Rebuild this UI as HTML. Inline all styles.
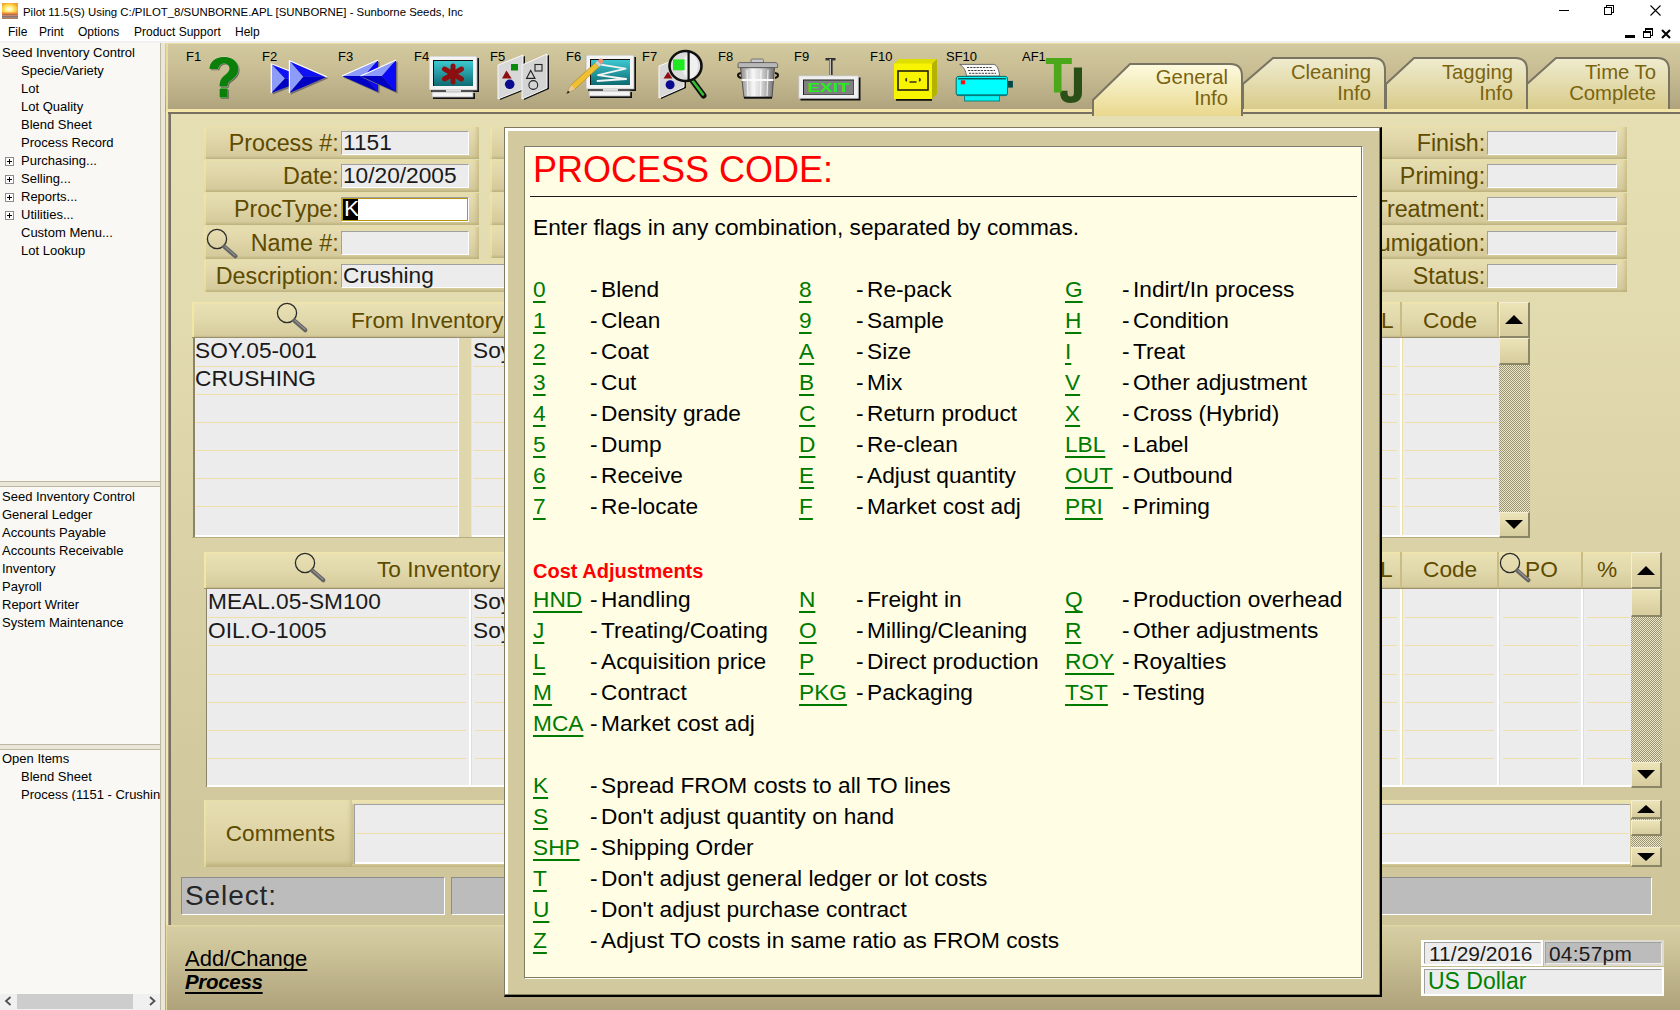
<!DOCTYPE html><html><head><meta charset="utf-8"><style>

*{margin:0;padding:0;box-sizing:border-box}
html,body{width:1680px;height:1010px;overflow:hidden;background:#fff;font-family:"Liberation Sans",sans-serif}
.a{position:absolute}
.t{position:absolute;white-space:nowrap;line-height:1}
#title{left:0;top:0;width:1680px;height:22px;background:#fff}
#menu{left:0;top:22px;width:1680px;height:20px;background:#fff}
#left{left:0;top:42px;width:160px;height:968px;background:#f9f8f4}
.tree{font-size:13px;color:#000}
.pbox{position:absolute;width:9px;height:9px;border:1px solid #8c8c8c;background:#fff}
.pbox:before{content:"";position:absolute;left:1px;top:3px;width:5px;height:1px;background:#000}
.pbox:after{content:"";position:absolute;left:3px;top:1px;width:1px;height:5px;background:#000}
#main{left:165px;top:42px;width:1515px;height:968px;background:#d9d0a5}
.lbl{position:absolute;background:linear-gradient(#f0e5ad 0,#e6ddb1 2px,#e0d6a9 40%,#d4ca9b 90%,#bfb37e 100%);box-shadow:inset 2px 0 0 rgba(244,232,164,0.6),inset -4px 0 4px -2px rgba(180,166,110,0.6)}
.lbltxt{color:#5e4b00;font-size:22.7px}
.inp{position:absolute;background:#ececec;border-top:1px solid #a0a0a0;border-left:1px solid #a0a0a0;border-right:1px solid #fff;border-bottom:1px solid #fff}
.val{color:#1a1a1a;font-size:22.7px}
.hdr{position:absolute;background:linear-gradient(#f2e6ab 0,#e8dfb3 3px,#e1d8ab 50%,#d6cc9c 92%,#b9ad78 100%);box-shadow:inset 2px 0 0 rgba(244,232,164,0.9)}
.grid{position:absolute;background:#ececec}
.rl{position:absolute;height:1px;background:#efdfa6}
.sbtn{position:absolute;background:linear-gradient(#ece3b8,#d6cc9d);border-top:1px solid #f4eed4;border-left:1px solid #f4eed4;border-right:2px solid #8b8666;border-bottom:2px solid #8b8666}
.track{position:absolute;background-color:#c8c0a0;background-image:repeating-conic-gradient(#9c9472 0 25%,#ece6c8 0 50%);background-size:2px 2px}
.upar{position:absolute;width:0;height:0;border-left:9px solid transparent;border-right:9px solid transparent;border-bottom:9px solid #000}
.dnar{position:absolute;width:0;height:0;border-left:9px solid transparent;border-right:9px solid transparent;border-top:9px solid #000}
.code{color:#007a00;font-size:22.7px;text-decoration:underline;text-decoration-thickness:2px;text-underline-offset:4px;text-decoration-skip-ink:none}
.dtxt{color:#000;font-size:22.7px}

</style></head><body>
<svg class="a" style="left:2px;top:3px" width="16" height="16"><defs><radialGradient id="sun" cx="0.45" cy="0.55" r="0.6"><stop offset="0" stop-color="#fff"/><stop offset="0.3" stop-color="#fff8a0"/><stop offset="0.7" stop-color="#fcd040"/><stop offset="1" stop-color="#f0a030"/></radialGradient></defs><rect x="0" y="0" width="16" height="11" fill="url(#sun)"/><rect x="0" y="9.5" width="16" height="1.5" fill="#f08a40"/><rect x="0" y="11" width="16" height="1.2" fill="#b07040"/><rect x="0" y="12.2" width="16" height="1.2" fill="#c07060"/><rect x="0" y="13.4" width="16" height="1.2" fill="#504048"/><rect x="0" y="14.6" width="16" height="1.4" fill="#b08060"/></svg>
<div class="t" style="left:23px;top:6.5px;font-size:11.4px;color:#000">Pilot 11.5(S) Using C:/PILOT_8/SUNBORNE.APL [SUNBORNE] - Sunborne Seeds, Inc</div>
<div class="a" style="left:1559px;top:10px;width:10px;height:1px;background:#000"></div>
<div class="a" style="left:1606px;top:5px;width:8px;height:8px;border:1px solid #000;background:#fff"></div>
<div class="a" style="left:1604px;top:7px;width:8px;height:8px;border:1px solid #000;background:#fff"></div>
<svg class="a" style="left:1650px;top:5px" width="11" height="11"><path d="M0.5 0.5L10.5 10.5M10.5 0.5L0.5 10.5" stroke="#000" stroke-width="1.1"/></svg>
<div class="t" style="left:8px;top:26px;font-size:12px;color:#000">File</div>
<div class="t" style="left:39px;top:26px;font-size:12px;color:#000">Print</div>
<div class="t" style="left:78px;top:26px;font-size:12px;color:#000">Options</div>
<div class="t" style="left:134px;top:26px;font-size:12px;color:#000">Product Support</div>
<div class="t" style="left:235px;top:26px;font-size:12px;color:#000">Help</div>
<div class="a" style="left:1625px;top:35px;width:10px;height:3px;background:#000"></div>
<div class="a" style="left:1645px;top:28px;width:8px;height:8px;border:1px solid #000;border-top-width:2px;background:#fff"></div>
<div class="a" style="left:1643px;top:31px;width:8px;height:7px;border:1px solid #000;border-top-width:2px;background:#fff"></div>
<svg class="a" style="left:1661px;top:29px" width="10" height="10"><path d="M1 1L9 9M9 1L1 9" stroke="#000" stroke-width="2.1"/></svg>
<div class="a" style="left:0;top:41px;width:1680px;height:2px;background:#f0f0f0;z-index:5"></div>
<div id="left" class="a">
<div class="t tree" style="left:2px;top:4px">Seed Inventory Control</div>
<div class="t tree" style="left:21px;top:22px">Specie/Variety</div>
<div class="t tree" style="left:21px;top:40px">Lot</div>
<div class="t tree" style="left:21px;top:58px">Lot Quality</div>
<div class="t tree" style="left:21px;top:76px">Blend Sheet</div>
<div class="t tree" style="left:21px;top:94px">Process Record</div>
<div class="t tree" style="left:21px;top:112px">Purchasing...</div>
<div class="pbox" style="left:5px;top:115px"></div>
<div class="t tree" style="left:21px;top:130px">Selling...</div>
<div class="pbox" style="left:5px;top:133px"></div>
<div class="t tree" style="left:21px;top:148px">Reports...</div>
<div class="pbox" style="left:5px;top:151px"></div>
<div class="t tree" style="left:21px;top:166px">Utilities...</div>
<div class="pbox" style="left:5px;top:169px"></div>
<div class="t tree" style="left:21px;top:184px">Custom Menu...</div>
<div class="t tree" style="left:21px;top:202px">Lot Lookup</div>
<div class="a" style="left:0;top:439px;width:160px;height:1px;background:#bcb8a4"></div>
<div class="a" style="left:0;top:440px;width:160px;height:4px;background:#ebe7d8"></div>
<div class="a" style="left:0;top:444px;width:160px;height:1px;background:#bcb8a4"></div>
<div class="t tree" style="left:2px;top:448px">Seed Inventory Control</div>
<div class="t tree" style="left:2px;top:466px">General Ledger</div>
<div class="t tree" style="left:2px;top:484px">Accounts Payable</div>
<div class="t tree" style="left:2px;top:502px">Accounts Receivable</div>
<div class="t tree" style="left:2px;top:520px">Inventory</div>
<div class="t tree" style="left:2px;top:538px">Payroll</div>
<div class="t tree" style="left:2px;top:556px">Report Writer</div>
<div class="t tree" style="left:2px;top:574px">System Maintenance</div>
<div class="a" style="left:0;top:702px;width:160px;height:1px;background:#bcb8a4"></div>
<div class="a" style="left:0;top:703px;width:160px;height:4px;background:#ebe7d8"></div>
<div class="a" style="left:0;top:707px;width:160px;height:1px;background:#bcb8a4"></div>
<div class="t tree" style="left:2px;top:710px;max-width:158px;overflow:hidden">Open Items</div>
<div class="t tree" style="left:21px;top:728px;max-width:139px;overflow:hidden">Blend Sheet</div>
<div class="t tree" style="left:21px;top:746px;max-width:139px;overflow:hidden">Process (1151 - Crushing)</div>
<div class="a" style="left:0;top:952px;width:160px;height:16px;background:#f0f0f0"></div>
<div class="a" style="left:17px;top:952px;width:116px;height:15px;background:#cdcdcd"></div>
<svg class="a" style="left:4px;top:954px" width="9" height="10"><path d="M6.5 1L2 5L6.5 9" stroke="#505050" stroke-width="1.8" fill="none"/></svg>
<svg class="a" style="left:148px;top:954px" width="9" height="10"><path d="M2 1L6.5 5L2 9" stroke="#505050" stroke-width="1.8" fill="none"/></svg>
</div>
<div class="a" style="left:160px;top:42px;width:1px;height:968px;background:#bcb8a4"></div>
<div class="a" style="left:161px;top:42px;width:4px;height:968px;background:#ebe7d8"></div>
<div class="a" style="left:165px;top:42px;width:1px;height:968px;background:#aeaa9a"></div>
<div class="a" style="left:165px;top:42px;width:1515px;height:70px;background:linear-gradient(#ddd3a8 0,#d3c9a0 2px,#c8bd93 40%,#b9ae86 75%,#aca17a 100%)"></div>
<div class="a" style="left:165px;top:43px;width:1515px;height:1px;background:#e8dca0"></div>
<div class="a" style="left:166px;top:42px;width:2px;height:67px;background:#eadc9e"></div>
<div class="t" style="left:186px;top:50px;font-size:13px;color:#000">F1</div>
<div class="t" style="left:262px;top:50px;font-size:13px;color:#000">F2</div>
<div class="t" style="left:338px;top:50px;font-size:13px;color:#000">F3</div>
<div class="t" style="left:414px;top:50px;font-size:13px;color:#000">F4</div>
<div class="t" style="left:490px;top:50px;font-size:13px;color:#000">F5</div>
<div class="t" style="left:566px;top:50px;font-size:13px;color:#000">F6</div>
<div class="t" style="left:642px;top:50px;font-size:13px;color:#000">F7</div>
<div class="t" style="left:718px;top:50px;font-size:13px;color:#000">F8</div>
<div class="t" style="left:794px;top:50px;font-size:13px;color:#000">F9</div>
<div class="t" style="left:870px;top:50px;font-size:13px;color:#000">F10</div>
<div class="t" style="left:946px;top:50px;font-size:13px;color:#000">SF10</div>
<div class="t" style="left:1022px;top:50px;font-size:13px;color:#000">AF1</div>
<svg class="a" style="left:205px;top:52px" width="40" height="50"><g transform="translate(1.3,1.3)" fill="#6e6a5c"><path d="M4.5 17C4.5 10 10 5 19 5C28 5 33.3 10 33.3 17C33.3 23 29 26 24.5 29.5C22.8 31 22.6 32 22.6 34.5L14.6 34.5C14.6 29 16 26.5 19.5 23.5C23 20.5 24.5 19 24.5 16.5C24.5 13.5 22 11.5 19 11.5C15.5 11.5 13.5 14 13.3 17Z"/><rect x="14.6" y="36.5" width="8" height="9"/></g><g fill="#0a800a" stroke="#f0f0e0" stroke-width="0.5"><path d="M4.5 17C4.5 10 10 5 19 5C28 5 33.3 10 33.3 17C33.3 23 29 26 24.5 29.5C22.8 31 22.6 32 22.6 34.5L14.6 34.5C14.6 29 16 26.5 19.5 23.5C23 20.5 24.5 19 24.5 16.5C24.5 13.5 22 11.5 19 11.5C15.5 11.5 13.5 14 13.3 17Z"/><rect x="14.6" y="36.5" width="8" height="9"/></g><g fill="#0a800a"><path d="M4.5 17C4.5 10 10 5 19 5C28 5 33.3 10 33.3 17C33.3 23 29 26 24.5 29.5C22.8 31 22.6 32 22.6 34.5L14.6 34.5C14.6 29 16 26.5 19.5 23.5C23 20.5 24.5 19 24.5 16.5C24.5 13.5 22 11.5 19 11.5C15.5 11.5 13.5 14 13.3 17Z"/><rect x="14.6" y="36.5" width="8" height="9"/></g></svg>
<svg class="a" style="left:268px;top:57px" width="64" height="42"><path d="M4.8 8.3L42.3 22.95L4.8 37.6Z" fill="#787070"/><path d="M3.3 6.8L17 21.45L3.3 36.1Z" fill="#8c9cf8"/><path d="M3.3 6.8L40.8 21.45L17 21.45Z" fill="#1010f4"/><path d="M17 21.45L40.8 21.45L3.3 36.1Z" fill="#0000c4"/><path d="M3.3 36.1L3.3 6.8L40.8 21.45" fill="none" stroke="#fff" stroke-width="1.2"/><path d="M22.9 5.1L60.4 21.35L22.9 37.6Z" fill="#787070"/><path d="M21.4 3.6L35.4 19.85L21.4 36.1Z" fill="#8c9cf8"/><path d="M21.4 3.6L58.9 19.85L35.4 19.85Z" fill="#1010f4"/><path d="M35.4 19.85L58.9 19.85L21.4 36.1Z" fill="#0000c4"/><path d="M21.4 36.1L21.4 3.6L58.9 19.85" fill="none" stroke="#fff" stroke-width="1.2"/></svg>
<svg class="a" style="left:339px;top:57px" width="64" height="42"><path d="M40.5 4.5L4.4 20.5L40.5 36.5Z" fill="#787070"/><path d="M2.9 19.0L39 3L25 19.0Z" fill="#8c9cf8"/><path d="M39 3L39 35L25 19.0Z" fill="#0a0af8"/><path d="M2.9 19.0L25 19.0L39 35Z" fill="#0000c4"/><path d="M2.9 19.0L39 3" fill="none" stroke="#fff" stroke-width="1.2"/><path d="M58.5 4.5L23.1 20.5L58.5 36.5Z" fill="#787070"/><path d="M21.6 19.0L57 3L43 19.0Z" fill="#8c9cf8"/><path d="M57 3L57 35L43 19.0Z" fill="#0a0af8"/><path d="M21.6 19.0L43 19.0L57 35Z" fill="#0000c4"/><path d="M21.6 19.0L57 3" fill="none" stroke="#fff" stroke-width="1.2"/></svg>
<svg class="a" style="left:429px;top:56px" width="52" height="44"><defs><linearGradient id="scr" x1="0" y1="0" x2="0" y2="1"><stop offset="0" stop-color="#3cc8d0"/><stop offset="1" stop-color="#0e6a72"/></linearGradient></defs><rect x="2" y="2" width="48" height="34" fill="#101010"/><rect x="0" y="0" width="48" height="34" fill="#f4f4f4" stroke="#b0b0b0" stroke-width="0.8"/><rect x="4" y="4" width="40" height="26" fill="#101010"/><rect x="5" y="5" width="39" height="25" fill="url(#scr)"/><rect x="17" y="34" width="15" height="3" fill="#e0e0e0"/><rect x="18" y="36" width="15" height="1.5" fill="#202020"/><rect x="4" y="37" width="42" height="6" fill="#101010"/><rect x="3" y="36" width="41" height="5" fill="#f4f4f4" stroke="#b0b0b0" stroke-width="0.8"/><g stroke="#8e0f0f" stroke-width="5" stroke-linecap="round"><path d="M24 10L24 26"/><path d="M15.5 13L32.5 23"/><path d="M32.5 13L15.5 23"/></g><circle cx="24" cy="18" r="3.5" fill="#8e0f0f"/></svg>
<svg class="a" style="left:497px;top:53px" width="54" height="48"><path d="M3 13L28 3L28 37L3 47Z" fill="#101010"/><path d="M1 12L26 2L26 36L1 46Z" fill="#d8d8d8" stroke="#f8f8f8" stroke-width="1"/><path d="M27 13L52 2L52 36L27 47Z" fill="#101010"/><path d="M25 12L50 1L50 35L25 46Z" fill="#d4d4d4" stroke="#f8f8f8" stroke-width="1"/><rect x="14" y="11" width="7" height="6.5" fill="#0a8a0a"/><path d="M5 25.4L9.4 17.5L14.7 25.4Z" fill="#8e0f0f"/><circle cx="12.7" cy="31.3" r="4.8" fill="#0a0a8e"/><rect x="38" y="11.5" width="7" height="6.5" fill="none" stroke="#222" stroke-width="1.1"/><path d="M29.5 25.4L33.7 17.5L38 25.4Z" fill="none" stroke="#222" stroke-width="1.1"/><circle cx="36.3" cy="32" r="4.4" fill="none" stroke="#222" stroke-width="1.1"/></svg>
<svg class="a" style="left:566px;top:55px" width="70" height="46"><g transform="translate(20,0)"><defs><linearGradient id="scr2" x1="0" y1="0" x2="0" y2="1"><stop offset="0" stop-color="#3cc8d0"/><stop offset="1" stop-color="#0e6a72"/></linearGradient></defs><rect x="2" y="2" width="48" height="34" fill="#101010"/><rect x="0" y="0" width="48" height="34" fill="#f4f4f4" stroke="#b0b0b0" stroke-width="0.8"/><rect x="4" y="4" width="40" height="26" fill="#101010"/><rect x="5" y="5" width="39" height="25" fill="url(#scr2)"/><rect x="17" y="34" width="15" height="3" fill="#e0e0e0"/><rect x="18" y="36" width="15" height="1.5" fill="#202020"/><rect x="4" y="37" width="42" height="6" fill="#101010"/><rect x="3" y="36" width="41" height="5" fill="#f4f4f4" stroke="#b0b0b0" stroke-width="0.8"/></g><path d="M35 9.6L59.6 13.6L32 20.1L60.2 24L30.8 26" stroke="#f4f4f4" stroke-width="1.8" fill="none" stroke-linejoin="round"/><path d="M1 38L5 30L29 8L33 12L9 34Z" fill="#f0c030" stroke="#a08020" stroke-width="0.6"/><path d="M29 8L31.5 5.8L35.5 9.8L33 12Z" fill="#d0d0d0"/><path d="M31.5 5.8L33 4.4C34.5 3 36.5 3.5 37 5C37.5 6 37 7.5 35.5 9.8Z" fill="#f09078"/><path d="M1 38L5 30L9 34Z" fill="#e8c8a0"/><path d="M0.5 39L2 35.5L3.8 37.3Z" fill="#202020"/></svg>
<svg class="a" style="left:656px;top:48px" width="52" height="54"><path d="M5 20L30 10L30 40L5 51Z" fill="#101010"/><path d="M3 18L28 8L28 39L3 50Z" fill="#d8d8d8" stroke="#f8f8f8"/><path d="M7.5 30.5L12 23.7L16.5 30.5Z" fill="#8e0f0f"/><circle cx="14.1" cy="36.7" r="4.5" fill="#0a0a8e"/><path d="M36 32L47.5 47.5" stroke="#101010" stroke-width="6" stroke-linecap="round"/><path d="M36 32L47 46.5" stroke="#30c030" stroke-width="2.6" stroke-linecap="round"/><ellipse cx="29.5" cy="18" rx="16" ry="15" fill="#dcdcdc" stroke="#101010" stroke-width="2.6"/><ellipse cx="34" cy="18" rx="8" ry="12" fill="#f0f0f0"/><rect x="17" y="11.4" width="11.6" height="10.9" fill="#20e820"/><path d="M32.6 3.5L32.6 32.5" stroke="#101010" stroke-width="2.2"/></svg>
<svg class="a" style="left:736px;top:58px" width="46" height="42"><defs><linearGradient id="tc" x1="0" y1="0" x2="1" y2="0"><stop offset="0" stop-color="#8c8c8c"/><stop offset="0.35" stop-color="#f4f4f4"/><stop offset="0.6" stop-color="#d8d8d8"/><stop offset="1" stop-color="#707070"/></linearGradient></defs><path d="M15 4.5L15 2C15 1 16 1 17 1L26 1C27 1 27.5 1.5 27.5 2.5L27.5 4.5Z" fill="#c8c8c8" stroke="#606060" stroke-width="0.8"/><path d="M5 20C1 19 1 15.5 5 15M39 15C43 15.5 43 19 39 20" fill="none" stroke="#101010" stroke-width="2"/><path d="M4.5 9.6L38.5 9.6L36 39.7L8 39.7Z" fill="url(#tc)" stroke="#404040" stroke-width="0.8"/><path d="M11 12L12 38M18 12L18.5 38M25 12L24.5 38M32 12L31 38" stroke="#fafafa" stroke-width="1.3" opacity="0.8"/><path d="M5.5 21.9L37.5 21.9" stroke="#fafafa" stroke-width="2"/><path d="M2 6C2 5 3 4.6 4 4.6L39 4.6C40 4.6 41.6 5 41.6 6.5L41.6 9.6L2 9.6Z" fill="#b8b8b8" stroke="#505050" stroke-width="0.8"/><path d="M8 39.7L36 39.7" stroke="#101010" stroke-width="2"/></svg>
<svg class="a" style="left:798px;top:57px" width="64" height="44"><rect x="27.5" y="1" width="10" height="2.4" fill="#303030"/><rect x="31" y="2" width="3.6" height="16" fill="#303030"/><rect x="31.6" y="2" width="1.2" height="16" fill="#e8e8e8"/><rect x="2.5" y="20.5" width="60" height="23" fill="#101010"/><rect x="0.8" y="18.8" width="59.5" height="22.5" fill="#f0f0f0" stroke="#c0c0c0" stroke-width="0.8"/><rect x="5" y="22.5" width="51" height="15.5" fill="#202020"/><rect x="6" y="23.5" width="49.5" height="14" fill="#808080"/><text x="9.5" y="35.3" font-family="Liberation Sans" font-size="13.5" font-weight="bold" fill="#20f020" textLength="42" lengthAdjust="spacingAndGlyphs">EXIT</text></svg>
<svg class="a" style="left:893px;top:58px" width="46" height="44"><path d="M1 6L6 1L44 1L39 6Z" fill="#dede00"/><path d="M39 6L44 1L44 36L39 41Z" fill="#b4b400"/><rect x="1" y="5.5" width="38" height="35.5" fill="#f8f400"/><rect x="5" y="13" width="30" height="19" fill="none" stroke="#202010" stroke-width="1.6"/><path d="M14 20.5C12.5 21 12.5 22.5 14 23M26 20.5C27.5 21 27.5 22.5 26 23M16.5 24L23.5 24" stroke="#303018" stroke-width="1.6" fill="none"/><rect x="3" y="41" width="36" height="1.8" fill="#101010"/></svg>
<svg class="a" style="left:955px;top:63px" width="60" height="40"><path d="M4.7 1.4L38.7 1.4C42 1.4 44.5 8 44.5 13L11.4 13C11 8 9 4 4.7 1.4Z" fill="#fafafa" stroke="#505050" stroke-width="0.8"/><path d="M12 4.5L37 4.5M13 7.5L40 7.5M14 10.3L41 10.3" stroke="#404040" stroke-width="1" stroke-dasharray="2.2,1"/><rect x="52" y="17.9" width="5.9" height="6.7" fill="#004848"/><rect x="9.6" y="32" width="34.9" height="6" fill="#00f4f4" stroke="#007070" stroke-width="0.8"/><path d="M1.2 16C1.2 14 2.5 13.4 4 13.4L50 13.4C51.8 13.4 52.5 14.5 52.5 16L52.5 30C52.5 32 51 32.6 50 32.6L4 32.6C2 32.6 1.2 31.5 1.2 30Z" fill="#00ffff" stroke="#006a6a" stroke-width="1"/><path d="M3 15.8L51 15.8" stroke="#006060" stroke-width="1.4"/><rect x="5.8" y="17.3" width="4.4" height="4" fill="#ff1010"/><path d="M2 32L52 32" stroke="#008080" stroke-width="1.5"/></svg>
<svg class="a" style="left:1045px;top:57px" width="40" height="48"><path d="M28.9 10.5L37 10.5L37 36C37 43 32 46 25 46C19 46 15.5 42.5 15.2 36.5L15.2 33.7L22.5 33.7L22.5 36C22.5 38.5 23.5 39.5 26 39.5C28 39.5 28.9 38.5 28.9 36Z" fill="#2a5018"/><path d="M0.9 1.1L26.8 1.1L26.8 6.9L16.5 6.9L16.5 35.5L8.9 35.5L8.9 6.9L0.9 6.9Z" fill="#4aa81a"/></svg>
<div class="a" style="left:166px;top:112px;width:1514px;height:813px;background:linear-gradient(#e6dfb4 0,#e3dbb0 25%,#dad1a6 55%,#d3c99e 80%,#cfc59a 100%)"></div>
<div class="a" style="left:166px;top:109px;width:2px;height:816px;background:#f4e8b0"></div>
<div class="a" style="left:168px;top:112px;width:1px;height:813px;background:#a09880"></div>
<div class="a" style="left:169px;top:112px;width:2px;height:813px;background:#787060"></div>
<div class="a" style="left:166px;top:109px;width:919px;height:3px;background:#f4e6a8"></div>
<div class="a" style="left:168px;top:112px;width:917px;height:2px;background:#787060"></div>
<div class="lbl" style="left:204px;top:127px;width:275px;height:32px"></div><div class="t lbltxt" style="left:38.80000000000001px;width:300px;text-align:right;top:131.9px;font-size:23.3px">Process #:</div>
<div class="inp" style="left:341px;top:131px;width:128px;height:24px;background:#ececec;"></div>
<div class="t val" style="left:343px;top:131.1px">1151</div>
<div class="lbl" style="left:204px;top:160px;width:275px;height:32px"></div><div class="t lbltxt" style="left:38.80000000000001px;width:300px;text-align:right;top:165.1px;font-size:23.3px">Date:</div>
<div class="inp" style="left:341px;top:164px;width:128px;height:24px;background:#ececec;"></div>
<div class="t val" style="left:343px;top:164.3px">10/20/2005</div>
<div class="lbl" style="left:204px;top:193px;width:275px;height:32px"></div><div class="t lbltxt" style="left:38.80000000000001px;width:300px;text-align:right;top:198.4px;font-size:23.3px">ProcType:</div>
<div class="a" style="left:341px;top:197px;width:128px;height:25px;background:#fff;border-top:1px solid #a0a0a0;border-left:1px solid #a0a0a0;border-right:1px solid #fff;border-bottom:1px solid #fff"></div>
<div class="a" style="left:342px;top:198px;width:126px;height:23px;border:1px solid #b39a10"></div>
<div class="a" style="left:343px;top:199px;width:15px;height:21px;background:#000"></div>
<div class="t val" style="left:344px;top:197.3px;color:#fff">K</div>
<div class="lbl" style="left:204px;top:227px;width:275px;height:32px"></div><div class="t lbltxt" style="left:38.80000000000001px;width:300px;text-align:right;top:231.6px;font-size:23.3px">Name #:</div>
<div class="inp" style="left:341px;top:231px;width:128px;height:24px;background:#ececec;"></div>
<div class="lbl" style="left:204px;top:260px;width:400px;height:32px"></div><div class="t lbltxt" style="left:38.80000000000001px;width:300px;text-align:right;top:264.9px;font-size:23.3px">Description:</div>
<div class="inp" style="left:341px;top:264px;width:200px;height:24px;background:#ececec;"></div>
<div class="t val" style="left:343px;top:264.1px">Crushing</div>
<svg class="a" style="left:206px;top:228px" width="34" height="34"><circle cx="11" cy="11" r="9.6" fill="none" stroke="#2a2a2a" stroke-width="1.3"/><path d="M18.3 18.6L29.3 28.2" stroke="#646464" stroke-width="4.2" stroke-linecap="round"/><path d="M19 18.6L29 27.4" stroke="#959595" stroke-width="1.2" stroke-linecap="round"/></svg>
<div class="lbl" style="left:490px;top:127px;width:60px;height:32px"></div>
<div class="lbl" style="left:490px;top:160px;width:60px;height:32px"></div>
<div class="lbl" style="left:490px;top:193px;width:60px;height:32px"></div>
<div class="lbl" style="left:490px;top:226px;width:60px;height:32px"></div>
<div class="lbl" style="left:1340px;top:127px;width:287px;height:32px"></div><div class="t lbltxt" style="left:1185.3px;width:300px;text-align:right;top:131.9px;font-size:23.3px">Finish:</div>
<div class="inp" style="left:1487px;top:131px;width:130px;height:24px;background:#ececec;"></div>
<div class="lbl" style="left:1340px;top:160px;width:287px;height:32px"></div><div class="t lbltxt" style="left:1185.3px;width:300px;text-align:right;top:165.1px;font-size:23.3px">Priming:</div>
<div class="inp" style="left:1487px;top:164px;width:130px;height:24px;background:#ececec;"></div>
<div class="lbl" style="left:1340px;top:193px;width:287px;height:32px"></div><div class="t lbltxt" style="left:1185.3px;width:300px;text-align:right;top:198.4px;font-size:23.3px">Treatment:</div>
<div class="inp" style="left:1487px;top:197px;width:130px;height:24px;background:#ececec;"></div>
<div class="lbl" style="left:1340px;top:227px;width:287px;height:32px"></div><div class="t lbltxt" style="left:1185.3px;width:300px;text-align:right;top:231.6px;font-size:23.3px">Fumigation:</div>
<div class="inp" style="left:1487px;top:231px;width:130px;height:24px;background:#ececec;"></div>
<div class="lbl" style="left:1340px;top:260px;width:287px;height:32px"></div><div class="t lbltxt" style="left:1185.3px;width:300px;text-align:right;top:264.9px;font-size:23.3px">Status:</div>
<div class="inp" style="left:1487px;top:264px;width:130px;height:24px;background:#ececec;"></div>
<div class="hdr" style="left:192px;top:302px;width:1307px;height:36px"></div>
<div class="t lbltxt" style="left:351px;top:309.1px">From Inventory</div>
<svg class="a" style="left:276px;top:302px" width="34" height="34"><circle cx="11" cy="11" r="9.6" fill="none" stroke="#2a2a2a" stroke-width="1.3"/><path d="M18.3 18.6L29.3 28.2" stroke="#646464" stroke-width="4.2" stroke-linecap="round"/><path d="M19 18.6L29 27.4" stroke="#959595" stroke-width="1.2" stroke-linecap="round"/></svg>
<div class="a" style="left:1400px;top:302px;width:2px;height:36px;background:#c9bd85"></div>
<div class="a" style="left:1497px;top:302px;width:2px;height:36px;background:#c9bd85"></div>
<div class="t lbltxt" style="left:1423px;top:309.1px">Code</div>
<div class="t lbltxt" style="left:1381px;top:309.1px">L</div>
<div class="a" style="left:192px;top:337px;width:1307px;height:1px;background:#9a9070"></div>
<div class="grid" style="left:193px;top:338px;width:1306px;height:199px"></div>
<div class="a" style="left:193px;top:338px;width:2px;height:199px;background:#8a8468"></div>
<div class="a" style="left:458px;top:338px;width:1px;height:199px;background:#fff"></div>
<div class="a" style="left:459px;top:338px;width:12px;height:199px;background:#dfd6ac"></div>
<div class="a" style="left:471px;top:338px;width:1px;height:199px;background:#f3e7b0"></div>
<div class="a" style="left:1400px;top:338px;width:2px;height:199px;background:#fff"></div>
<div class="a" style="left:1402px;top:338px;width:1px;height:199px;background:#efdfa6"></div>
<div class="rl" style="left:196px;top:366px;width:262px"></div>
<div class="rl" style="left:473px;top:366px;width:924px"></div>
<div class="rl" style="left:1405px;top:366px;width:92px"></div>
<div class="rl" style="left:196px;top:394px;width:262px"></div>
<div class="rl" style="left:473px;top:394px;width:924px"></div>
<div class="rl" style="left:1405px;top:394px;width:92px"></div>
<div class="rl" style="left:196px;top:422px;width:262px"></div>
<div class="rl" style="left:473px;top:422px;width:924px"></div>
<div class="rl" style="left:1405px;top:422px;width:92px"></div>
<div class="rl" style="left:196px;top:450px;width:262px"></div>
<div class="rl" style="left:473px;top:450px;width:924px"></div>
<div class="rl" style="left:1405px;top:450px;width:92px"></div>
<div class="rl" style="left:196px;top:478px;width:262px"></div>
<div class="rl" style="left:473px;top:478px;width:924px"></div>
<div class="rl" style="left:1405px;top:478px;width:92px"></div>
<div class="rl" style="left:196px;top:506px;width:262px"></div>
<div class="rl" style="left:473px;top:506px;width:924px"></div>
<div class="rl" style="left:1405px;top:506px;width:92px"></div>
<div class="a" style="left:195px;top:535px;width:1304px;height:2px;background:#fff"></div>
<div class="a" style="left:459px;top:338px;width:12px;height:200px;background:#dfd6ac"></div>
<div class="a" style="left:471px;top:338px;width:1px;height:200px;background:#f3e7b0"></div>
<div class="a" style="left:192px;top:537px;width:1307px;height:1px;background:#b8ad80"></div>
<div class="t val" style="left:195px;top:339.4px">SOY.05-001</div>
<div class="t val" style="left:195px;top:367.2px">CRUSHING</div>
<div class="t val" style="left:473px;top:339.4px">Soy</div>
<div class="track" style="left:1499px;top:338px;width:31px;height:174px"></div>
<div class="sbtn" style="left:1499px;top:302px;width:31px;height:36px"></div>
<div class="upar" style="left:1505px;top:315px"></div>
<div class="sbtn" style="left:1499px;top:338px;width:31px;height:27px"></div>
<div class="sbtn" style="left:1499px;top:512px;width:31px;height:26px"></div>
<div class="dnar" style="left:1505px;top:520px"></div>
<div class="hdr" style="left:204px;top:552px;width:1427px;height:37px"></div>
<div class="t lbltxt" style="left:377px;top:557.8px">To Inventory</div>
<svg class="a" style="left:294px;top:552px" width="34" height="34"><circle cx="11" cy="11" r="9.6" fill="none" stroke="#2a2a2a" stroke-width="1.3"/><path d="M18.3 18.6L29.3 28.2" stroke="#646464" stroke-width="4.2" stroke-linecap="round"/><path d="M19 18.6L29 27.4" stroke="#959595" stroke-width="1.2" stroke-linecap="round"/></svg>
<div class="a" style="left:1400px;top:552px;width:2px;height:37px;background:#c9bd85"></div>
<div class="a" style="left:1497px;top:552px;width:2px;height:37px;background:#c9bd85"></div>
<div class="a" style="left:1581px;top:552px;width:2px;height:37px;background:#c9bd85"></div>
<div class="t lbltxt" style="left:1423px;top:557.8px">Code</div>
<div class="t lbltxt" style="left:1380px;top:557.8px">L</div>
<svg class="a" style="left:1499px;top:552px" width="34" height="34"><circle cx="11" cy="11" r="9.6" fill="none" stroke="#2a2a2a" stroke-width="1.3"/><path d="M18.3 18.6L29.3 28.2" stroke="#646464" stroke-width="4.2" stroke-linecap="round"/><path d="M19 18.6L29 27.4" stroke="#959595" stroke-width="1.2" stroke-linecap="round"/></svg>
<div class="t lbltxt" style="left:1525px;top:557.8px">PO</div>
<div class="t lbltxt" style="left:1597px;top:557.8px">%</div>
<div class="a" style="left:204px;top:588px;width:1427px;height:1px;background:#9a9070"></div>
<div class="grid" style="left:206px;top:589px;width:1425px;height:198px"></div>
<div class="a" style="left:206px;top:589px;width:1px;height:198px;background:#8a8468"></div>
<div class="rl" style="left:208px;top:617px;width:1422px"></div>
<div class="rl" style="left:208px;top:645px;width:1422px"></div>
<div class="rl" style="left:208px;top:674px;width:1422px"></div>
<div class="rl" style="left:208px;top:702px;width:1422px"></div>
<div class="rl" style="left:208px;top:730px;width:1422px"></div>
<div class="rl" style="left:208px;top:758px;width:1422px"></div>
<div class="a" style="left:466px;top:589px;width:3px;height:198px;background:#ececec"></div>
<div class="a" style="left:469px;top:589px;width:2px;height:198px;background:#fff"></div>
<div class="a" style="left:471px;top:589px;width:1px;height:198px;background:#efdfa6"></div>
<div class="a" style="left:472px;top:589px;width:3px;height:198px;background:#ececec"></div>
<div class="a" style="left:1397px;top:589px;width:3px;height:198px;background:#ececec"></div>
<div class="a" style="left:1400px;top:589px;width:2px;height:198px;background:#fff"></div>
<div class="a" style="left:1402px;top:589px;width:1px;height:198px;background:#efdfa6"></div>
<div class="a" style="left:1403px;top:589px;width:3px;height:198px;background:#ececec"></div>
<div class="a" style="left:1494px;top:589px;width:3px;height:198px;background:#ececec"></div>
<div class="a" style="left:1497px;top:589px;width:2px;height:198px;background:#fff"></div>
<div class="a" style="left:1499px;top:589px;width:1px;height:198px;background:#efdfa6"></div>
<div class="a" style="left:1500px;top:589px;width:3px;height:198px;background:#ececec"></div>
<div class="a" style="left:1578px;top:589px;width:3px;height:198px;background:#ececec"></div>
<div class="a" style="left:1581px;top:589px;width:2px;height:198px;background:#fff"></div>
<div class="a" style="left:1583px;top:589px;width:1px;height:198px;background:#efdfa6"></div>
<div class="a" style="left:1584px;top:589px;width:3px;height:198px;background:#ececec"></div>
<div class="rl" style="left:208px;top:617px;width:258px"></div>
<div class="rl" style="left:475px;top:617px;width:922px"></div>
<div class="rl" style="left:1405px;top:617px;width:89px"></div>
<div class="rl" style="left:1503px;top:617px;width:75px"></div>
<div class="rl" style="left:1587px;top:617px;width:42px"></div>
<div class="rl" style="left:208px;top:645px;width:258px"></div>
<div class="rl" style="left:475px;top:645px;width:922px"></div>
<div class="rl" style="left:1405px;top:645px;width:89px"></div>
<div class="rl" style="left:1503px;top:645px;width:75px"></div>
<div class="rl" style="left:1587px;top:645px;width:42px"></div>
<div class="rl" style="left:208px;top:674px;width:258px"></div>
<div class="rl" style="left:475px;top:674px;width:922px"></div>
<div class="rl" style="left:1405px;top:674px;width:89px"></div>
<div class="rl" style="left:1503px;top:674px;width:75px"></div>
<div class="rl" style="left:1587px;top:674px;width:42px"></div>
<div class="rl" style="left:208px;top:702px;width:258px"></div>
<div class="rl" style="left:475px;top:702px;width:922px"></div>
<div class="rl" style="left:1405px;top:702px;width:89px"></div>
<div class="rl" style="left:1503px;top:702px;width:75px"></div>
<div class="rl" style="left:1587px;top:702px;width:42px"></div>
<div class="rl" style="left:208px;top:730px;width:258px"></div>
<div class="rl" style="left:475px;top:730px;width:922px"></div>
<div class="rl" style="left:1405px;top:730px;width:89px"></div>
<div class="rl" style="left:1503px;top:730px;width:75px"></div>
<div class="rl" style="left:1587px;top:730px;width:42px"></div>
<div class="rl" style="left:208px;top:758px;width:258px"></div>
<div class="rl" style="left:475px;top:758px;width:922px"></div>
<div class="rl" style="left:1405px;top:758px;width:89px"></div>
<div class="rl" style="left:1503px;top:758px;width:75px"></div>
<div class="rl" style="left:1587px;top:758px;width:42px"></div>
<div class="a" style="left:207px;top:785px;width:1424px;height:2px;background:#fff"></div>
<div class="t val" style="left:208px;top:590.3px">MEAL.05-SM100</div>
<div class="t val" style="left:208px;top:618.5px">OIL.O-1005</div>
<div class="t val" style="left:473px;top:590.3px">Soy</div>
<div class="t val" style="left:473px;top:618.5px">Soy</div>
<div class="track" style="left:1631px;top:589px;width:31px;height:175px"></div>
<div class="sbtn" style="left:1631px;top:552px;width:31px;height:37px"></div>
<div class="upar" style="left:1637px;top:566px"></div>
<div class="sbtn" style="left:1631px;top:589px;width:31px;height:28px"></div>
<div class="sbtn" style="left:1631px;top:762px;width:31px;height:26px"></div>
<div class="dnar" style="left:1637px;top:770px"></div>
<div class="lbl" style="left:204px;top:800px;width:149px;height:67px"></div><div class="t lbltxt" style="left:35px;width:300px;text-align:right;top:822.9px;font-size:22.6px">Comments</div>
<div class="grid" style="left:354px;top:804px;width:1276px;height:60px;border-top:1px solid #a0a0a0;border-left:1px solid #a0a0a0"></div>
<div class="rl" style="left:356px;top:833px;width:1272px"></div>
<div class="a" style="left:355px;top:862px;width:1275px;height:2px;background:#fff"></div>
<div class="a" style="left:352px;top:800px;width:1279px;height:4px;background:linear-gradient(#f0e5ad,#e6ddb1)"></div>
<div class="a" style="left:352px;top:864px;width:1279px;height:3px;background:linear-gradient(#d4ca9b,#bfb37e)"></div>
<div class="track" style="left:1631px;top:800px;width:31px;height:67px"></div>
<div class="sbtn" style="left:1631px;top:800px;width:31px;height:19px"></div>
<div class="upar" style="left:1637px;top:805px;border-bottom-width:8px"></div>
<div class="sbtn" style="left:1631px;top:820px;width:31px;height:16px"></div>
<div class="sbtn" style="left:1631px;top:847px;width:31px;height:20px"></div>
<div class="dnar" style="left:1637px;top:853px;border-top-width:8px"></div>
<div class="a" style="left:181px;top:877px;width:264px;height:38px;background:#bcbcbc;border-top:1px solid #8c8c8c;border-left:1px solid #8c8c8c;border-right:1px solid #fff;border-bottom:1px solid #fff"></div>
<div class="t" style="left:185px;top:881.8px;font-size:28px;color:#262626;letter-spacing:0.9px">Select:</div>
<div class="a" style="left:451px;top:877px;width:1201px;height:38px;background:#bcbcbc;border-top:1px solid #8c8c8c;border-left:1px solid #8c8c8c;border-right:1px solid #fff;border-bottom:1px solid #fff"></div>
<div class="a" style="left:166px;top:925px;width:1514px;height:85px;background:linear-gradient(#e6daa2 0,#d7cda4 2px,#cbc196 35%,#b8ad85 75%,#aea37b 100%)"></div>
<div class="a" style="left:166px;top:925px;width:1px;height:85px;background:#e6daa2"></div>
<div class="t" style="left:185px;top:947.6px;font-size:22px;color:#000;text-decoration:underline;text-decoration-thickness:2px;text-underline-offset:3px;text-decoration-skip-ink:none">Add/Change</div>
<div class="t" style="left:185px;top:971.8px;font-size:20.5px;color:#000;font-weight:bold;font-style:italic;text-decoration:underline;text-decoration-thickness:2px;text-underline-offset:3px;text-decoration-skip-ink:none;letter-spacing:-0.3px">Process</div>
<div class="a" style="left:1421px;top:940px;width:122px;height:26px;background:#fff"></div>
<div class="inp" style="left:1424px;top:942px;width:117px;height:22px;background:#ececec;border-right-color:#ececec;border-bottom-color:#ececec"></div>
<div class="t" style="left:1429px;top:943px;font-size:21px;color:#1a1a1a">11/29/2016</div>
<div class="a" style="left:1544px;top:940px;width:120px;height:26px;background:#dedad0"></div>
<div class="inp" style="left:1545px;top:942px;width:117px;height:22px;background:#bcbcbc;border-right-color:#ececec;border-bottom-color:#ececec"></div>
<div class="t" style="left:1549px;top:943.7px;font-size:20.8px;color:#1a1a1a;letter-spacing:0.3px">04:57pm</div>
<div class="a" style="left:1421px;top:967px;width:243px;height:29px;background:#fff"></div>
<div class="inp" style="left:1424px;top:969px;width:238px;height:25px;background:#ececec;border-right-color:#ececec;border-bottom-color:#ececec"></div>
<div class="t" style="left:1428px;top:970px;font-size:23px;color:#008000">US Dollar</div>
<div class="a" style="left:1085px;top:109px;width:595px;height:3px;background:#f4e6a8"></div>
<div class="a" style="left:1085px;top:112px;width:595px;height:2px;background:#787060"></div>
<svg class="a" style="left:1085px;top:50px" width="595" height="66"><defs><linearGradient id="tg1" x1="0" y1="0" x2="0" y2="1"><stop offset="0" stop-color="#fdfbe0"/><stop offset="1" stop-color="#e9d88e"/></linearGradient><linearGradient id="tg2" x1="0" y1="0" x2="0" y2="1"><stop offset="0" stop-color="#efeccf"/><stop offset="1" stop-color="#d9cb8b"/></linearGradient></defs><path d="M442 59 L442 34 L471 8 L572 8 Q584 8 584 20 L584 59" fill="url(#tg2)" stroke="#7a7462" stroke-width="2"/><path d="M301 59 L301 34 L329 8 L430 8 Q442 8 442 20 L442 59" fill="url(#tg2)" stroke="#7a7462" stroke-width="2"/><path d="M158 59 L158 34 L188 8 L288 8 Q300 8 300 20 L300 59" fill="url(#tg2)" stroke="#7a7462" stroke-width="2"/><path d="M8 66 L8 50 L45 14 L145 14 Q157 14 157 26 L157 66" fill="url(#tg1)" stroke="#7a7462" stroke-width="2"/></svg>
<div class="t" style="left:1028px;width:200px;text-align:right;top:67px;font-size:20.3px;color:#7a6410">General</div>
<div class="t" style="left:1028px;width:200px;text-align:right;top:88px;font-size:20.3px;color:#7a6410">Info</div>
<div class="t" style="left:1171px;width:200px;text-align:right;top:62px;font-size:20.3px;color:#7a6410">Cleaning</div>
<div class="t" style="left:1171px;width:200px;text-align:right;top:83px;font-size:20.3px;color:#7a6410">Info</div>
<div class="t" style="left:1313px;width:200px;text-align:right;top:62px;font-size:20.3px;color:#7a6410">Tagging</div>
<div class="t" style="left:1313px;width:200px;text-align:right;top:83px;font-size:20.3px;color:#7a6410">Info</div>
<div class="t" style="left:1456px;width:200px;text-align:right;top:62px;font-size:20.3px;color:#7a6410">Time To</div>
<div class="t" style="left:1456px;width:200px;text-align:right;top:83px;font-size:20.3px;color:#7a6410">Complete</div>
<div class="a" style="left:504px;top:127px;width:878px;height:870px;background:#d3c99e;border-top:1px solid #7f7a5e;border-left:1px solid #7f7a5e;border-right:2px solid #000;border-bottom:2px solid #000"></div>
<div class="a" style="left:505px;top:128px;width:875px;height:3px;background:#fff"></div>
<div class="a" style="left:505px;top:128px;width:3px;height:867px;background:#fff"></div>
<div class="a" style="left:1379px;top:128px;width:1px;height:867px;background:#85805e"></div>
<div class="a" style="left:505px;top:994px;width:875px;height:1px;background:#85805e"></div>
<div class="a" style="left:524px;top:146px;width:839px;height:833px;background:#fffee4;border-top:1px solid #7f7a5e;border-left:1px solid #7f7a5e;border-right:1px solid #fff;border-bottom:1px solid #fff"></div>
<div class="a" style="left:525px;top:147px;width:836px;height:1px;background:#fff"></div>
<div class="a" style="left:525px;top:147px;width:1px;height:830px;background:#fff"></div>
<div class="a" style="left:1361px;top:147px;width:1px;height:831px;background:#7f7a5e"></div>
<div class="a" style="left:525px;top:977px;width:837px;height:1px;background:#7f7a5e"></div>
<div class="t" style="left:533px;top:151.5px;font-size:36px;color:#f00">PROCESS CODE:</div>
<div class="a" style="left:530px;top:196px;width:827px;height:1px;background:#1a1a1a"></div>
<div class="t dtxt" style="left:533px;top:216.3px">Enter flags in any combination, separated by commas.</div>
<div class="t code" style="left:533px;top:278.3px">0</div><div class="t dtxt" style="left:590px;top:278.3px">-</div><div class="t dtxt" style="left:601px;top:278.3px">Blend</div>
<div class="t code" style="left:799px;top:278.3px">8</div><div class="t dtxt" style="left:856px;top:278.3px">-</div><div class="t dtxt" style="left:867px;top:278.3px">Re-pack</div>
<div class="t code" style="left:1065px;top:278.3px">G</div><div class="t dtxt" style="left:1122px;top:278.3px">-</div><div class="t dtxt" style="left:1133px;top:278.3px">Indirt/In process</div>
<div class="t code" style="left:533px;top:309.3px">1</div><div class="t dtxt" style="left:590px;top:309.3px">-</div><div class="t dtxt" style="left:601px;top:309.3px">Clean</div>
<div class="t code" style="left:799px;top:309.3px">9</div><div class="t dtxt" style="left:856px;top:309.3px">-</div><div class="t dtxt" style="left:867px;top:309.3px">Sample</div>
<div class="t code" style="left:1065px;top:309.3px">H</div><div class="t dtxt" style="left:1122px;top:309.3px">-</div><div class="t dtxt" style="left:1133px;top:309.3px">Condition</div>
<div class="t code" style="left:533px;top:340.3px">2</div><div class="t dtxt" style="left:590px;top:340.3px">-</div><div class="t dtxt" style="left:601px;top:340.3px">Coat</div>
<div class="t code" style="left:799px;top:340.3px">A</div><div class="t dtxt" style="left:856px;top:340.3px">-</div><div class="t dtxt" style="left:867px;top:340.3px">Size</div>
<div class="t code" style="left:1065px;top:340.3px">I</div><div class="t dtxt" style="left:1122px;top:340.3px">-</div><div class="t dtxt" style="left:1133px;top:340.3px">Treat</div>
<div class="t code" style="left:533px;top:371.3px">3</div><div class="t dtxt" style="left:590px;top:371.3px">-</div><div class="t dtxt" style="left:601px;top:371.3px">Cut</div>
<div class="t code" style="left:799px;top:371.3px">B</div><div class="t dtxt" style="left:856px;top:371.3px">-</div><div class="t dtxt" style="left:867px;top:371.3px">Mix</div>
<div class="t code" style="left:1065px;top:371.3px">V</div><div class="t dtxt" style="left:1122px;top:371.3px">-</div><div class="t dtxt" style="left:1133px;top:371.3px">Other adjustment</div>
<div class="t code" style="left:533px;top:402.3px">4</div><div class="t dtxt" style="left:590px;top:402.3px">-</div><div class="t dtxt" style="left:601px;top:402.3px">Density grade</div>
<div class="t code" style="left:799px;top:402.3px">C</div><div class="t dtxt" style="left:856px;top:402.3px">-</div><div class="t dtxt" style="left:867px;top:402.3px">Return product</div>
<div class="t code" style="left:1065px;top:402.3px">X</div><div class="t dtxt" style="left:1122px;top:402.3px">-</div><div class="t dtxt" style="left:1133px;top:402.3px">Cross (Hybrid)</div>
<div class="t code" style="left:533px;top:433.3px">5</div><div class="t dtxt" style="left:590px;top:433.3px">-</div><div class="t dtxt" style="left:601px;top:433.3px">Dump</div>
<div class="t code" style="left:799px;top:433.3px">D</div><div class="t dtxt" style="left:856px;top:433.3px">-</div><div class="t dtxt" style="left:867px;top:433.3px">Re-clean</div>
<div class="t code" style="left:1065px;top:433.3px">LBL</div><div class="t dtxt" style="left:1122px;top:433.3px">-</div><div class="t dtxt" style="left:1133px;top:433.3px">Label</div>
<div class="t code" style="left:533px;top:464.3px">6</div><div class="t dtxt" style="left:590px;top:464.3px">-</div><div class="t dtxt" style="left:601px;top:464.3px">Receive</div>
<div class="t code" style="left:799px;top:464.3px">E</div><div class="t dtxt" style="left:856px;top:464.3px">-</div><div class="t dtxt" style="left:867px;top:464.3px">Adjust quantity</div>
<div class="t code" style="left:1065px;top:464.3px">OUT</div><div class="t dtxt" style="left:1122px;top:464.3px">-</div><div class="t dtxt" style="left:1133px;top:464.3px">Outbound</div>
<div class="t code" style="left:533px;top:495.3px">7</div><div class="t dtxt" style="left:590px;top:495.3px">-</div><div class="t dtxt" style="left:601px;top:495.3px">Re-locate</div>
<div class="t code" style="left:799px;top:495.3px">F</div><div class="t dtxt" style="left:856px;top:495.3px">-</div><div class="t dtxt" style="left:867px;top:495.3px">Market cost adj</div>
<div class="t code" style="left:1065px;top:495.3px">PRI</div><div class="t dtxt" style="left:1122px;top:495.3px">-</div><div class="t dtxt" style="left:1133px;top:495.3px">Priming</div>
<div class="t" style="left:533px;top:560.7px;font-size:20px;font-weight:bold;color:#f00">Cost Adjustments</div>
<div class="t code" style="left:533px;top:588.1px">HND</div><div class="t dtxt" style="left:590px;top:588.1px">-</div><div class="t dtxt" style="left:601px;top:588.1px">Handling</div>
<div class="t code" style="left:799px;top:588.1px">N</div><div class="t dtxt" style="left:856px;top:588.1px">-</div><div class="t dtxt" style="left:867px;top:588.1px">Freight in</div>
<div class="t code" style="left:1065px;top:588.1px">Q</div><div class="t dtxt" style="left:1122px;top:588.1px">-</div><div class="t dtxt" style="left:1133px;top:588.1px">Production overhead</div>
<div class="t code" style="left:533px;top:619.1px">J</div><div class="t dtxt" style="left:590px;top:619.1px">-</div><div class="t dtxt" style="left:601px;top:619.1px">Treating/Coating</div>
<div class="t code" style="left:799px;top:619.1px">O</div><div class="t dtxt" style="left:856px;top:619.1px">-</div><div class="t dtxt" style="left:867px;top:619.1px">Milling/Cleaning</div>
<div class="t code" style="left:1065px;top:619.1px">R</div><div class="t dtxt" style="left:1122px;top:619.1px">-</div><div class="t dtxt" style="left:1133px;top:619.1px">Other adjustments</div>
<div class="t code" style="left:533px;top:650.1px">L</div><div class="t dtxt" style="left:590px;top:650.1px">-</div><div class="t dtxt" style="left:601px;top:650.1px">Acquisition price</div>
<div class="t code" style="left:799px;top:650.1px">P</div><div class="t dtxt" style="left:856px;top:650.1px">-</div><div class="t dtxt" style="left:867px;top:650.1px">Direct production</div>
<div class="t code" style="left:1065px;top:650.1px">ROY</div><div class="t dtxt" style="left:1122px;top:650.1px">-</div><div class="t dtxt" style="left:1133px;top:650.1px">Royalties</div>
<div class="t code" style="left:533px;top:681.1px">M</div><div class="t dtxt" style="left:590px;top:681.1px">-</div><div class="t dtxt" style="left:601px;top:681.1px">Contract</div>
<div class="t code" style="left:799px;top:681.1px">PKG</div><div class="t dtxt" style="left:856px;top:681.1px">-</div><div class="t dtxt" style="left:867px;top:681.1px">Packaging</div>
<div class="t code" style="left:1065px;top:681.1px">TST</div><div class="t dtxt" style="left:1122px;top:681.1px">-</div><div class="t dtxt" style="left:1133px;top:681.1px">Testing</div>
<div class="t code" style="left:533px;top:712.1px">MCA</div><div class="t dtxt" style="left:590px;top:712.1px">-</div><div class="t dtxt" style="left:601px;top:712.1px">Market cost adj</div>
<div class="t code" style="left:533px;top:773.8px">K</div><div class="t dtxt" style="left:590px;top:773.8px">-</div><div class="t dtxt" style="left:601px;top:773.8px">Spread FROM costs to all TO lines</div>
<div class="t code" style="left:533px;top:804.8px">S</div><div class="t dtxt" style="left:590px;top:804.8px">-</div><div class="t dtxt" style="left:601px;top:804.8px">Don't adjust quantity on hand</div>
<div class="t code" style="left:533px;top:835.8px">SHP</div><div class="t dtxt" style="left:590px;top:835.8px">-</div><div class="t dtxt" style="left:601px;top:835.8px">Shipping Order</div>
<div class="t code" style="left:533px;top:866.8px">T</div><div class="t dtxt" style="left:590px;top:866.8px">-</div><div class="t dtxt" style="left:601px;top:866.8px">Don't adjust general ledger or lot costs</div>
<div class="t code" style="left:533px;top:897.8px">U</div><div class="t dtxt" style="left:590px;top:897.8px">-</div><div class="t dtxt" style="left:601px;top:897.8px">Don't adjust purchase contract</div>
<div class="t code" style="left:533px;top:928.8px">Z</div><div class="t dtxt" style="left:590px;top:928.8px">-</div><div class="t dtxt" style="left:601px;top:928.8px">Adjust TO costs in same ratio as FROM costs</div>
</body></html>
